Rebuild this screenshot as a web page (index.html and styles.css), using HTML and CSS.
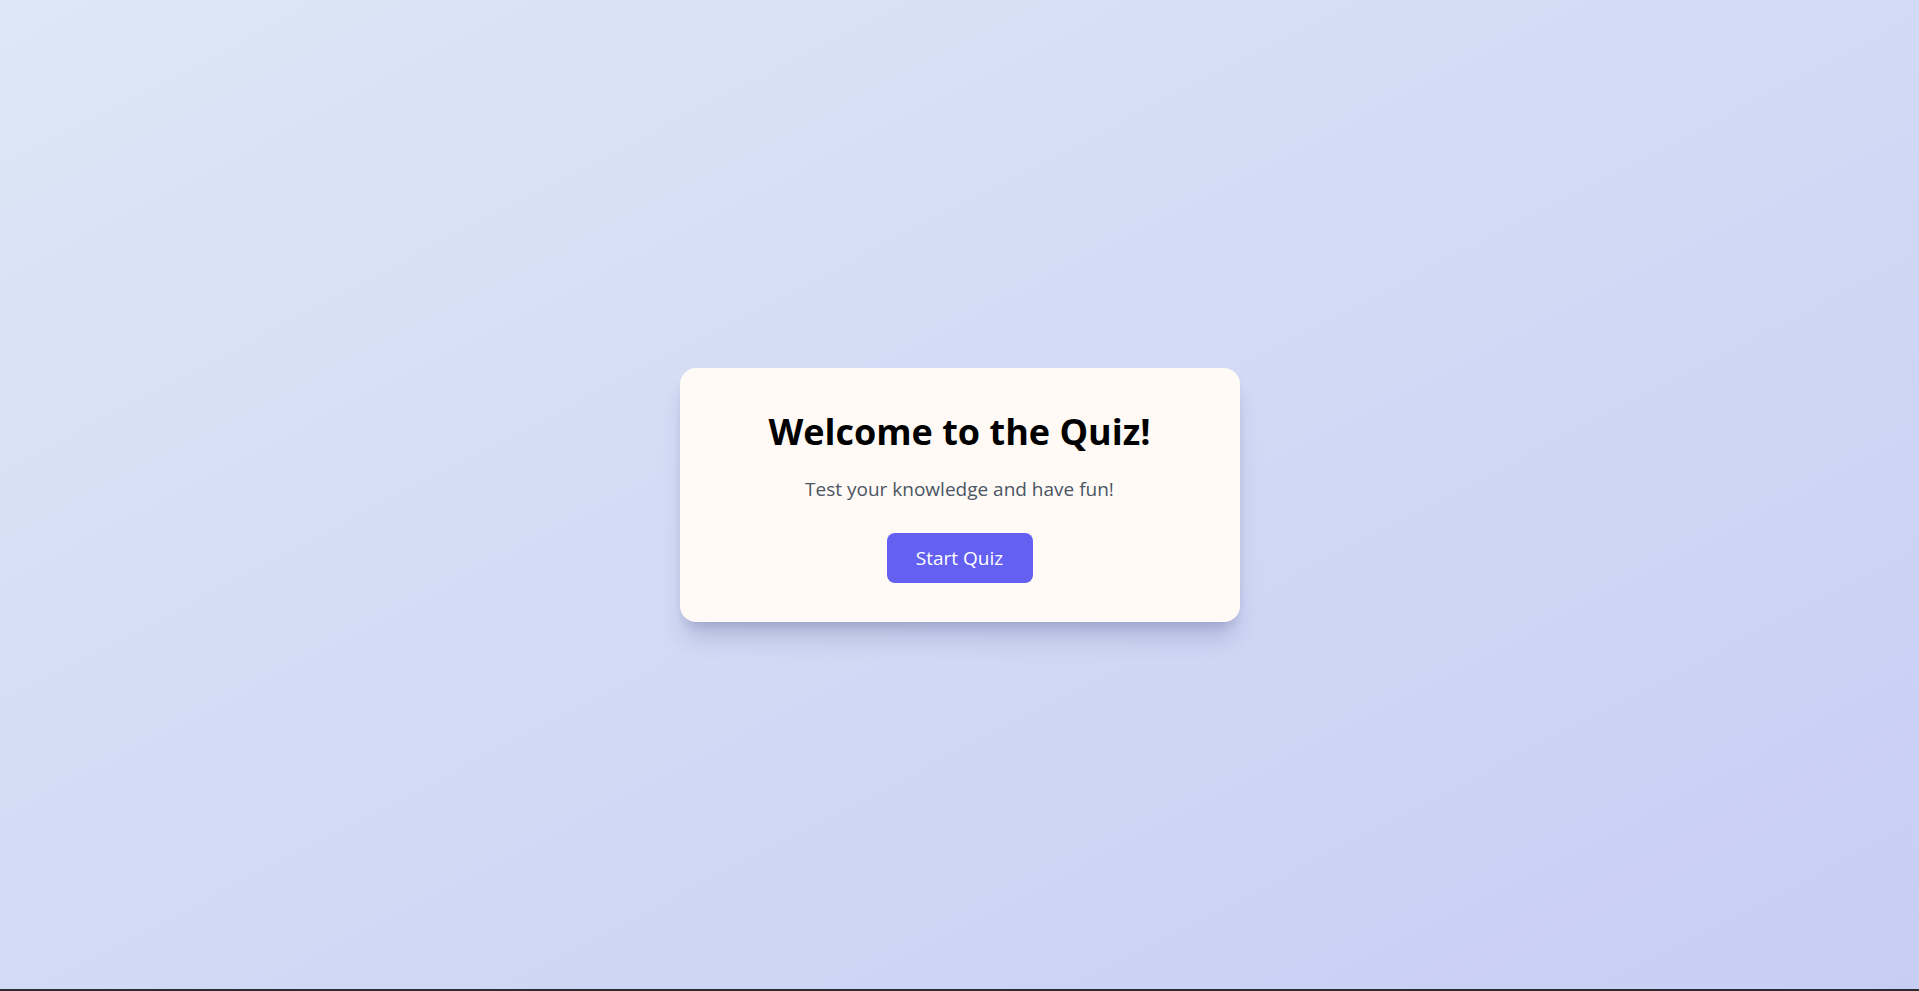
FILE: index.html
```html
<!DOCTYPE html>
<html lang="en">
<head>
<meta charset="utf-8">
<title>Quiz</title>
<link rel="stylesheet" href="styles.css">
</head>
<body>
<main class="stage">
  <section class="card">
    <h1 class="title">Welcome to the Quiz!</h1>
    <p class="subtitle">Test your knowledge and have fun!</p>
    <button class="start-btn" type="button">Start Quiz</button>
  </section>
</main>
<div class="bottom-edge"></div>
</body>
</html>
```
FILE: styles.css
```css
html, body {
  margin: 0;
  padding: 0;
  height: 100%;
}
body {
  display: flex;
  flex-direction: column;
  font-family: "Open Sans", "Noto Sans", sans-serif;
  background: linear-gradient(to bottom right, #dde7f6, #c8cdf4);
}
.stage {
  flex: 1;
  display: flex;
  align-items: center;
  justify-content: center;
}
.card {
  width: 560px;
  box-sizing: border-box;
  padding: 42px 40px 39px;
  background: #fffaf6;
  border-radius: 16px;
  box-shadow: 0 20px 25px -5px rgba(30, 40, 100, 0.18), 0 8px 12px -6px rgba(30, 40, 100, 0.18);
  display: flex;
  flex-direction: column;
  align-items: center;
  text-align: center;
}
.title {
  margin: 0 0 21px;
  font-size: 36px;
  line-height: 44px;
  font-weight: 700;
  color: #000;
}
.subtitle {
  margin: 0 0 30px;
  font-size: 19px;
  line-height: 28px;
  color: #4b5563;
}
.start-btn {
  font-family: inherit;
  font-size: 19px;
  line-height: 26px;
  height: 50px;
  width: 146px;
  padding: 0;
  border: none;
  border-radius: 8px;
  background: #6360f2;
  color: #fff;
  cursor: pointer;
}
.bottom-edge {
  height: 2px;
  background: #2b2b30;
  flex: none;
}
```
